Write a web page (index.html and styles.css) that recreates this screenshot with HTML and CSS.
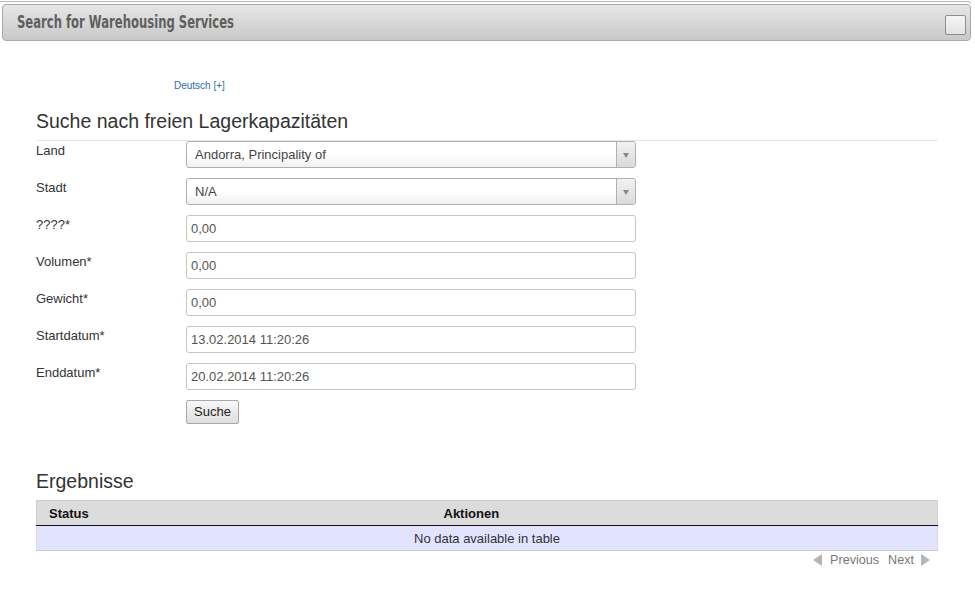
FILE: index.html
```html
<!DOCTYPE html>
<html>
<head>
<meta charset="utf-8">
<link rel="stylesheet" href="styles.css">
</head>
<body>
<div class="frame"></div>
<div class="panel-head">
  <span class="panel-title">Search for Warehousing Services</span>
  <span class="panel-box"></span>
</div>
<div class="content">
  <div class="lang"><a href="#">Deutsch [+]</a></div>
  <h2 class="section-title">Suche nach freien Lagerkapazitäten</h2>
  <form class="form">
    <label class="lbl">Land</label>
    <div class="select"><span class="sel-text">Andorra, Principality of</span><span class="sel-arrow"></span></div>
    <label class="lbl">Stadt</label>
    <div class="select"><span class="sel-text">N/A</span><span class="sel-arrow"></span></div>
    <label class="lbl">????*</label>
    <div class="input">0,00</div>
    <label class="lbl">Volumen*</label>
    <div class="input">0,00</div>
    <label class="lbl">Gewicht*</label>
    <div class="input">0,00</div>
    <label class="lbl">Startdatum*</label>
    <div class="input">13.02.2014 11:20:26</div>
    <label class="lbl">Enddatum*</label>
    <div class="input">20.02.2014 11:20:26</div>
    <span></span>
    <div><span class="btn">Suche</span></div>
  </form>
  <h2 class="results-title">Ergebnisse</h2>
  <table class="tbl">
    <thead>
      <tr><th class="c1">Status</th><th class="c2">Aktionen</th></tr>
    </thead>
    <tbody>
      <tr><td colspan="2" class="empty">No data available in table</td></tr>
    </tbody>
  </table>
  <div class="pager">
    <span class="arrow-left"></span><span class="pg">Previous</span>
    <span class="pg">Next</span><span class="arrow-right"></span>
  </div>
</div>
</body>
</html>
```
FILE: styles.css
```css
* { box-sizing: border-box; }
body {
  margin: 0;
  font-family: "Liberation Sans", Arial, sans-serif;
  font-size: 13px;
  color: #333;
  background: #fff;
}
.frame {
  margin-top: 1px;
  height: 3px;
  margin-right: 4px;
  border-top: 1px solid #b8b8b8;
  border-right: 1px solid #c8c8c8;
  border-top-right-radius: 4px;
}
.panel-head {
  margin: 0 4px 0 2px;
  height: 37px;
  border: 1px solid #a9a9a9;
  border-radius: 4px;
  background: linear-gradient(#e6e6e6, #c9c9c9);
  display: flex;
  align-items: center;
  justify-content: space-between;
  padding: 0 4px 0 14px;
}
.panel-title {
  display: inline-block;
  font-family: "DejaVu Sans Condensed", "Liberation Sans", sans-serif;
  font-weight: bold;
  font-size: 17px;
  color: #5f5f5f;
  transform: scaleX(0.76);
  transform-origin: left center;
  white-space: nowrap;
  margin-top: -1px;
}
.panel-box {
  width: 21px;
  height: 20px;
  border: 1px solid #8e8e8e;
  border-radius: 2px;
  background: linear-gradient(#f6f6f6, #e2e2e2);
  margin-top: 4px;
}
.content {
  width: 902px;
  margin-left: 36px;
}
.lang {
  margin-top: 39px;
  padding-left: 138px;
  font-size: 10px;
  line-height: 12px;
}
.lang a { color: #2a6ea8; text-decoration: none; }
.section-title {
  margin: 18px 0 0 0;
  font-weight: normal;
  font-size: 19.5px;
  line-height: 22px;
  color: #333;
  padding-bottom: 8px;
  border-bottom: 1px solid #e6e6e6;
}
.form {
  display: grid;
  grid-template-columns: 150px 450px;
  row-gap: 10px;
  margin-top: 0;
}
.lbl {
  line-height: 18px;
  padding-top: 1px;
  color: #333;
}
.input, .select {
  height: 27px;
  border: 1px solid #c6c6c6;
  border-radius: 3px;
  line-height: 25px;
  padding-left: 4px;
  color: #555;
  background: #fff;
}
.select {
  display: flex;
  padding-left: 0;
  border-color: #b0b0b0;
  background: linear-gradient(#fff 50%, #f0f0f0);
}
.sel-text {
  flex: 1;
  padding-left: 8px;
  color: #444;
}
.sel-arrow {
  width: 19px;
  border-left: 1px solid #b0b0b0;
  background: linear-gradient(#f2f2f2, #dadada);
  position: relative;
  border-radius: 0 3px 3px 0;
}
.sel-arrow::after {
  content: "";
  position: absolute;
  left: 6px;
  top: 11px;
  border-left: 3.5px solid transparent;
  border-right: 3.5px solid transparent;
  border-top: 5px solid #888;
}
.btn {
  display: inline-block;
  height: 24px;
  width: 53px;
  text-align: center;
  line-height: 22px;
  border: 1px solid #a8a8a8;
  border-radius: 2px;
  background: linear-gradient(#f8f8f8, #dedede);
  color: #222;
}
.results-title {
  margin: 46px 0 0 0;
  font-weight: normal;
  font-size: 19.5px;
  line-height: 22px;
  color: #333;
  padding-bottom: 8px;
}
.tbl {
  width: 902px;
  border-collapse: collapse;
}
.tbl th {
  background: #dcdcdc;
  height: 25px;
  font-weight: bold;
  color: #111;
  border-bottom: 1px solid #111;
  padding: 0;
  text-align: left;
  font-size: 13px;
}
.tbl .c1 { width: 396px; padding-left: 12px; border-top: 1px solid #cfcfcf; border-left: 1px solid #cfcfcf;}
.tbl .c2 { padding-left: 11px; border-top: 1px solid #cfcfcf; border-right: 1px solid #cfcfcf; }
.tbl td.empty {
  background: #e2e4ff;
  height: 25px;
  text-align: center;
  color: #333;
  padding: 0;
  border-bottom: 1px solid #c8c8d8;
  border-left: 1px solid #d8d8e8;
  border-right: 1px solid #d8d8e8;
}
.pager {
  display: flex;
  justify-content: flex-end;
  align-items: center;
  margin-top: 0;
  padding-right: 8px;
  color: #777;
  font-size: 12.6px;
  height: 18px;
}
.pg { margin: 0 4px 0 5px; }
.arrow-left {
  width: 0; height: 0;
  border-top: 6px solid transparent;
  border-bottom: 6px solid transparent;
  border-right: 9px solid #b4b4b4;
  margin-right: 3px;
}
.arrow-right {
  width: 0; height: 0;
  border-top: 6px solid transparent;
  border-bottom: 6px solid transparent;
  border-left: 9px solid #b4b4b4;
  margin-left: 3px;
}
```
